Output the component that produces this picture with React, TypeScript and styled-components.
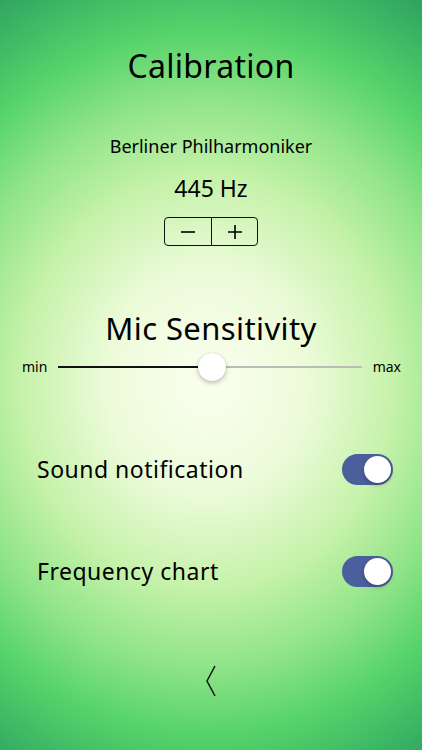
import styled, { createGlobalStyle } from "styled-components"

const GlobalStyle = createGlobalStyle`
  html, body {
    margin: 0;
    padding: 0;
  }
  body {
    font-family: "Noto Sans", Lato, sans-serif;
    color: #000;
  }
`

const Screen = styled.div`
  width: 422px;
  height: 750px;
  display: flex;
  flex-direction: column;
  align-items: center;
  background: radial-gradient(ellipse 100% 62% at 49% 51%, #fbffef 0%, #ecfbd9 24%, #c6f2aa 44%, #90e488 61%, #58d46b 75%, #3ab564 89%, #2b9a5e 100%);
  overflow: hidden;
`

const Title = styled.h1`
  margin: 45px 0 0;
  font-size: 32px;
  font-weight: 400;
  letter-spacing: 0.3px;
  line-height: 42px;
`

const Preset = styled.p`
  margin: 47px 0 0;
  font-size: 18px;
  line-height: 24px;
`

const Freq = styled.p`
  margin: 15px 0 0;
  font-size: 23px;
  line-height: 30px;
`

const Stepper = styled.div`
  margin-top: 14px;
  display: flex;
  border: 1px solid #111;
  border-radius: 4px;
  height: 27px;
`

const StepButton = styled.button`
  width: 46px;
  border: none;
  background: transparent;
  padding: 0;
  display: flex;
  align-items: center;
  justify-content: center;
  & + & {
    border-left: 1px solid #111;
  }
`

const SectionTitle = styled.h2`
  margin: 62px 0 0;
  font-size: 31px;
  font-weight: 400;
  letter-spacing: 0.4px;
  line-height: 40px;
`

const SliderRow = styled.div`
  align-self: stretch;
  display: flex;
  align-items: center;
  gap: 10px;
  padding: 0 21px 0 22px;
  margin-top: 9px;
  font-size: 14px;
`

const Track = styled.div`
  position: relative;
  flex: 1;
  height: 2px;
  background: #b9bdb6;
  margin: 0 1px;
`

const Fill = styled.div`
  height: 100%;
  background: #111;
`

const Thumb = styled.div`
  position: absolute;
  top: 50%;
  width: 28px;
  height: 28px;
  border-radius: 50%;
  background: #fff;
  transform: translate(-50%, -50%);
  box-shadow: 0 2px 5px rgba(0, 0, 0, 0.25), 0 0 1px rgba(0, 0, 0, 0.2);
`

const SettingRow = styled.div<{ $top: number }>`
  align-self: stretch;
  display: flex;
  align-items: center;
  justify-content: space-between;
  padding: 0 29px 0 37px;
  margin-top: ${(p) => p.$top}px;
  height: 32px;
`

const SettingLabel = styled.span`
  font-size: 23px;
  letter-spacing: 0.5px;
`

const Toggle = styled.div<{ $on: boolean }>`
  position: relative;
  width: 51px;
  height: 31px;
  border-radius: 16px;
  background: ${(p) => (p.$on ? "#4b5f9c" : "#ccc")};
`

const Knob = styled.div<{ $on: boolean }>`
  position: absolute;
  top: 2px;
  left: ${(p) => (p.$on ? "22px" : "2px")};
  width: 27px;
  height: 27px;
  border-radius: 50%;
  background: #fff;
  box-shadow: 0 2px 4px rgba(0, 0, 0, 0.25);
`

const Back = styled.button`
  margin-top: 77px;
  border: none;
  background: transparent;
  padding: 0;
`

const App = () => {
  const sensitivity = 0.505
  return (
    <Screen>
      <GlobalStyle />
      <Title>Calibration</Title>
      <Preset>Berliner Philharmoniker</Preset>
      <Freq>445 Hz</Freq>
      <Stepper>
        <StepButton aria-label="decrease">
          <svg width="16" height="16" viewBox="0 0 16 16">
            <path d="M1 8h14" stroke="#000" strokeWidth="1.6" />
          </svg>
        </StepButton>
        <StepButton aria-label="increase">
          <svg width="16" height="16" viewBox="0 0 16 16">
            <path d="M1 8h14M8 1v14" stroke="#000" strokeWidth="1.6" />
          </svg>
        </StepButton>
      </Stepper>

      <SectionTitle>Mic Sensitivity</SectionTitle>
      <SliderRow>
        <span>min</span>
        <Track>
          <Fill style={{ width: `${sensitivity * 100}%` }} />
          <Thumb style={{ left: `${sensitivity * 100}%` }} />
        </Track>
        <span>max</span>
      </SliderRow>

      <SettingRow $top={77}>
        <SettingLabel>Sound notification</SettingLabel>
        <Toggle $on>
          <Knob $on />
        </Toggle>
      </SettingRow>
      <SettingRow $top={70}>
        <SettingLabel>Frequency chart</SettingLabel>
        <Toggle $on>
          <Knob $on />
        </Toggle>
      </SettingRow>

      <Back aria-label="back">
        <svg width="14" height="34" viewBox="0 0 14 34">
          <path d="M11 2L3 17l8 15" fill="none" stroke="#111" strokeWidth="1.5" />
        </svg>
      </Back>
    </Screen>
  )
}

export default App
